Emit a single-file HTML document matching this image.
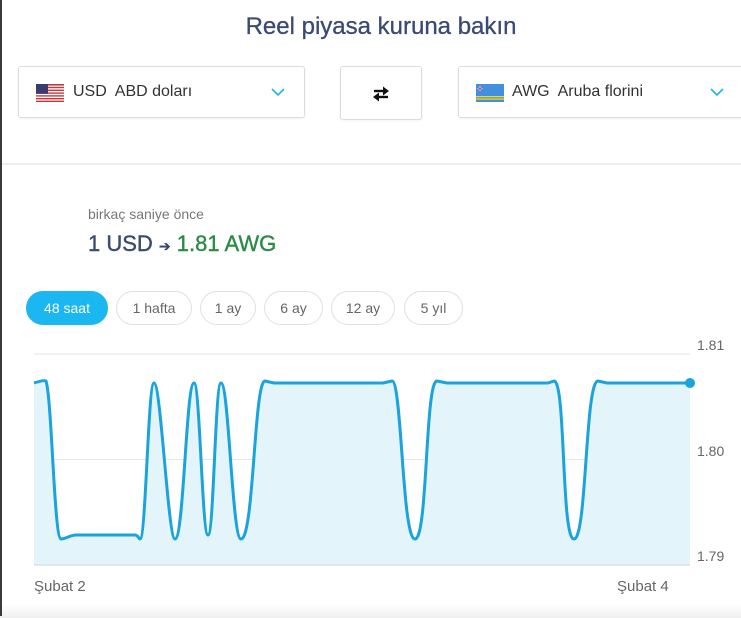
<!DOCTYPE html>
<html><head><meta charset="utf-8"><style>
*{margin:0;padding:0;box-sizing:border-box}
body{width:741px;height:618px;overflow:hidden;background:#fff;font-family:"Liberation Sans",sans-serif;position:relative}
.lb{position:absolute;left:0;top:0;width:2px;height:616px;background:#3a3a3a;z-index:5}
.bot{position:absolute;left:0;top:604px;width:741px;height:14px;background:linear-gradient(#fff,#f0f0f0)}
h1{position:absolute;top:13px;left:0;width:762px;text-align:center;font-size:24px;font-weight:normal;color:#3a4a72;-webkit-text-stroke:.3px #3a4a72}
.box{position:absolute;border:1px solid #dcdcdc;border-radius:3px;background:#fff;box-shadow:0 1px 2px rgba(0,0,0,.05)}
.sel{top:66px;height:52px;font-size:16px;color:#333;display:flex;align-items:center}
.chev{position:absolute;top:21px}
.t{position:absolute;white-space:nowrap}
.pill{position:absolute;top:291px;height:34px;border:1px solid #dde1e4;border-radius:17px;font-size:14px;color:#666;text-align:center;line-height:32px}
.ax{position:absolute;font-size:13px;color:#666}
</style></head><body>
<div class="lb"></div>
<h1>Reel piyasa kuruna bakın</h1>
<div class="box sel" style="left:18px;width:287px">
 <svg style="position:absolute;left:17px;top:17px" width="28" height="18" viewBox="0 0 28 18">
  <rect width="28" height="18" fill="#fff"/>
  <g fill="#c8363e"><rect y="0" width="28" height="1.6"/><rect y="2.8" width="28" height="1.4"/><rect y="5.6" width="28" height="1.4"/><rect y="8.4" width="28" height="1.4"/><rect y="11.2" width="28" height="1.4"/><rect y="14" width="28" height="1.4"/><rect y="16.6" width="28" height="1.4"/></g>
  <rect width="12" height="9.8" fill="#3c3b6e"/>
 </svg>
 <span class="t" style="left:54px;top:16px">USD&nbsp; ABD doları</span>
 <svg class="chev" style="left:252px" width="14" height="9" viewBox="0 0 14 9"><path d="M1 1l6 6 6-6" fill="none" stroke="#1ab7ea" stroke-width="1.6"/></svg>
</div>
<div class="box" style="left:340px;top:66px;width:82px;height:54px">
 <svg style="position:absolute;left:30px;top:19px" width="20" height="16" viewBox="0 0 20 16">
  <path d="M3 5h11" stroke="#111" stroke-width="2.4"/><path d="M12 0.5l6 4.5-6 4.5z" fill="#111"/>
  <path d="M17 11H6" stroke="#111" stroke-width="2.4"/><path d="M8 6.5l-6 4.5 6 4.5z" fill="#111"/>
 </svg>
</div>
<div class="box sel" style="left:458px;width:290px">
 <svg style="position:absolute;left:17px;top:17px" width="28" height="18" viewBox="0 0 28 18">
  <rect width="28" height="18" fill="#418fde"/><rect y="12" width="28" height="1.3" fill="#f9d616"/><rect y="14.4" width="28" height="1.3" fill="#f9d616"/>
  <path d="M4 2l.8 1.8 1.8.8-1.8.8L4 7.2l-.8-1.8L1.4 4.6l1.8-.8z" fill="#ef3340" stroke="#fff" stroke-width=".4"/>
 </svg>
 <span class="t" style="left:53px;top:16px">AWG&nbsp; Aruba florini</span>
 <svg class="chev" style="left:251px" width="14" height="9" viewBox="0 0 14 9"><path d="M1 1l6 6 6-6" fill="none" stroke="#1ab7ea" stroke-width="1.6"/></svg>
</div>
<div style="position:absolute;left:2px;top:163px;width:739px;height:2px;background:#eeeeee"></div>
<div class="t" style="left:88px;top:206px;font-size:14px;color:#777">birkaç saniye önce</div>
<div class="t" style="left:88px;top:231px;font-size:22px;color:#3a4a72;-webkit-text-stroke:.4px #3a4a72">1 USD <span style="font-size:14px">➔</span> <span style="color:#2e8b46;-webkit-text-stroke:.4px #2e8b46">1.81 AWG</span></div>
<div class="pill" style="left:26px;width:82px;background:#1ab7f0;border-color:#1ab7f0;color:#fff">48 saat</div>
<div class="pill" style="left:116px;width:76px">1 hafta</div>
<div class="pill" style="left:200px;width:56px">1 ay</div>
<div class="pill" style="left:264px;width:59px">6 ay</div>
<div class="pill" style="left:331px;width:64px">12 ay</div>
<div class="pill" style="left:404px;width:59px">5 yıl</div>
<svg style="position:absolute;left:0;top:0" width="741" height="618">
 <line x1="34" y1="354" x2="690" y2="354" stroke="#e6e6e6"/>
 <line x1="34" y1="459.5" x2="690" y2="459.5" stroke="#e6e6e6"/>
 <path d="M34 383 C40 381 44 380 46 381 C52 400 54 538 61 539 C66 539 70 535 76 535 L135 535 C138 535 139 539 140 539 C146 539 148 383 154 383 C161 383 168 539 175 539 C184 539 186 383 194 383 C200 383 202 535 208 535 C214 535 215 383 221 383 C229 383 232 539 241 539 C254 539 254 381 265 381 L274 383 L383 383 L392 381 C402 381 402 539 415 539 C428 539 425 381 437 381 L447 383 L548 383 L554 381 C566 381 561 539 574 539 C587 539 585 381 598 381 L607 383 L690 383 L690 565 L34 565 Z" fill="#e3f4fb"/>
 <line x1="34" y1="565" x2="690" y2="565" stroke="#cfd6db"/>
 <path d="M34 383 C40 381 44 380 46 381 C52 400 54 538 61 539 C66 539 70 535 76 535 L135 535 C138 535 139 539 140 539 C146 539 148 383 154 383 C161 383 168 539 175 539 C184 539 186 383 194 383 C200 383 202 535 208 535 C214 535 215 383 221 383 C229 383 232 539 241 539 C254 539 254 381 265 381 L274 383 L383 383 L392 381 C402 381 402 539 415 539 C428 539 425 381 437 381 L447 383 L548 383 L554 381 C566 381 561 539 574 539 C587 539 585 381 598 381 L607 383 L690 383" fill="none" stroke="#1aa3dc" stroke-width="3" stroke-linejoin="round"/>
 <circle cx="690" cy="383" r="5" fill="#1aa3dc"/>
</svg>
<div class="ax" style="left:697px;top:337px;font-size:14px">1.81</div>
<div class="ax" style="left:697px;top:443px;font-size:14px">1.80</div>
<div class="ax" style="left:697px;top:548px;font-size:14px">1.79</div>
<div class="bot"></div>
<div class="ax" style="left:34px;top:578px;font-size:15px">Şubat 2</div>
<div class="ax" style="left:617px;top:578px;font-size:15px">Şubat 4</div>
</body></html>
